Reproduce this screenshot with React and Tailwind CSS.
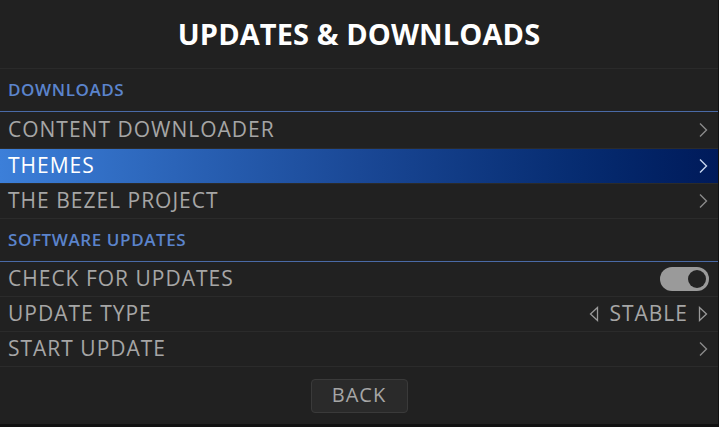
import React from "react";

const font = { fontFamily: '"Open Sans", "Noto Sans", sans-serif' };

function Chevron({ active }) {
  return (
    <svg width="10" height="16" viewBox="0 0 10 16" className="shrink-0">
      <path d="M2 1.5 L8.5 8 L2 14.5" fill="none" stroke={active ? "#c8d6f0" : "#8a8a8a"} strokeWidth="1.4" strokeLinejoin="miter" />
    </svg>
  );
}

function Tri({ dir }) {
  const d = dir === "left" ? "M8.5 1.5 L1.5 8 L8.5 14.5 Z" : "M1.5 1.5 L8.5 8 L1.5 14.5 Z";
  return (
    <svg width="10" height="16" viewBox="0 0 10 16" className="shrink-0">
      <path d={d} fill="none" stroke="#9a9a9a" strokeWidth="1.3" strokeLinejoin="miter" />
    </svg>
  );
}

function Row({ label, active, right, h = "h-[35px]" }) {
  return (
    <div
      className={`${h} flex items-center justify-between pl-2 pr-[10px] border-b border-[#2b2b2b] ${
        active ? "bg-gradient-to-r from-[#3c7fd9] via-[#1a4896] to-[#001a5a] text-white" : "text-[#a6a6a6]"
      }`}
    >
      <span className="text-[21px] leading-none tracking-[1px] pb-[2px]">{label}</span>
      {right}
    </div>
  );
}

function Header({ label }) {
  return (
    <div className="h-[43px] flex items-center pl-2 border-b border-[#4a6aa6]">
      <span className="text-[17px] font-semibold text-[#5b84cc] leading-none tracking-[0.6px] pb-[2px]">{label}</span>
    </div>
  );
}

export default function App() {
  return (
    <div className="w-[719px] h-[427px] bg-[#111111] overflow-hidden" style={font}>
      <div className="w-[718px] h-[424px] bg-[#212121] flex flex-col">
        <div className="h-[69px] flex items-center justify-center border-b border-[#2a2a2a]">
          <h1 className="text-[29px] font-bold text-white leading-none tracking-[0.1px] pb-[2px]">UPDATES &amp; DOWNLOADS</h1>
        </div>
        <Header label="DOWNLOADS" />
        <Row label="CONTENT DOWNLOADER" h="h-[37px]" right={<Chevron />} />
        <Row label="THEMES" active right={<Chevron active />} />
        <Row label="THE BEZEL PROJECT" right={<Chevron />} />
        <Header label="SOFTWARE UPDATES" />
        <Row
          label="CHECK FOR UPDATES"
          right={
            <div className="w-[49px] h-[24px] rounded-full bg-[#9a9a9a] flex items-center justify-end -mr-[1px]">
              <div className="w-[18px] h-[18px] rounded-full bg-[#222222] mr-[3px]" />
            </div>
          }
        />
        <Row
          label="UPDATE TYPE"
          right={
            <div className="flex items-center gap-[10px]">
              <Tri dir="left" />
              <span className="text-[21px] leading-none text-[#a6a6a6] tracking-[1px] pb-[2px]">STABLE</span>
              <Tri dir="right" />
            </div>
          }
        />
        <Row label="START UPDATE" right={<Chevron />} />
        <div className="flex-1 flex justify-center pt-[12px]">
          <div className="w-[97px] h-[34px] rounded-[4px] border border-[#3a3a3a] bg-[#2a2a2a] flex items-center justify-center">
            <span className="text-[20px] text-[#a6a6a6] leading-none tracking-[1px] pb-[2px]">BACK</span>
          </div>
        </div>
      </div>
    </div>
  );
}
